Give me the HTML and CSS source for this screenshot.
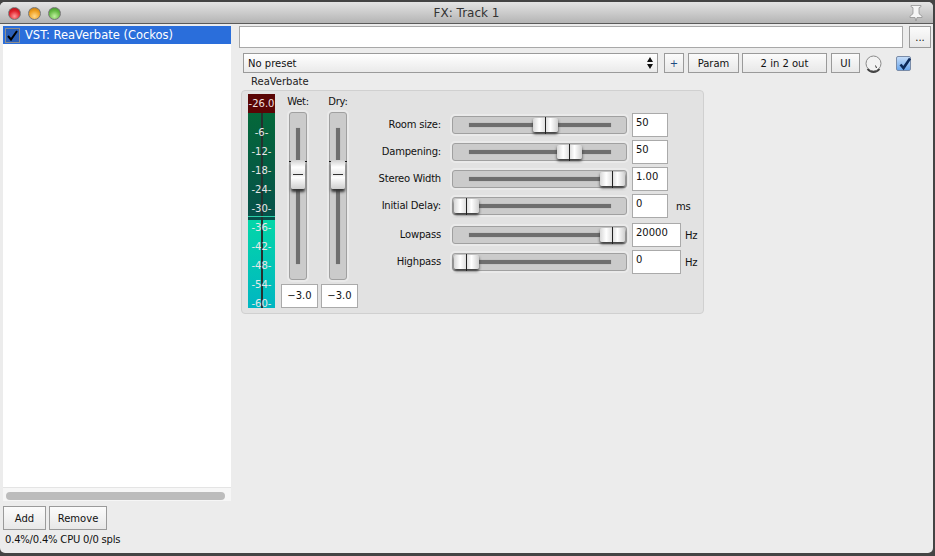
FILE: index.html
```html
<!DOCTYPE html>
<html lang="en">
<head>
  <meta charset="UTF-8">
  <title>FX: Track 1</title>
  <link rel="stylesheet" href="styles.css">
</head>
<body>
  <div class="window">
    <div class="titlebar">
      <div class="lights">
        <span class="light red"></span>
        <span class="light amber"></span>
        <span class="light green"></span>
      </div>
      <span class="title">FX: Track 1</span>
      <svg class="pin" width="14" height="16" viewBox="0 0 14 16">
        <path d="M2 .5h10v1.200l-2 1v6l3 2.500v1.300H8L7 16l-1-3.500H1v-1.300l3-2.500v-6l-2-1z" fill="#f6f6f6" stroke="#8a8a8a" stroke-width=".7"/>
      </svg>
    </div>

    <div class="main">
      <div class="sidebar">
        <div class="fxlist">
          <div class="fxrow selected">
            <span class="rowcheck">
              <svg width="13" height="13" viewBox="0 0 13 13"><path d="M2 7l3 3.500L11 2" fill="none" stroke="#000" stroke-width="2"/></svg>
            </span>
            VST: ReaVerbate (Cockos)
          </div>
          <div class="fxspace"></div>
          <div class="hscroll"><div class="hthumb"></div></div>
        </div>
        <div class="fxbuttons">
          <button class="btn add">Add</button>
          <button class="btn remove">Remove</button>
        </div>
        <div class="status">0.4%/0.4% CPU 0/0 spls</div>
      </div>

      <div class="content">
        <div class="toprow">
          <div class="namebox"></div>
          <button class="btn dots">...</button>
        </div>
        <div class="presetrow">
          <div class="preset">
            <span>No preset</span>
            <svg width="6" height="12" viewBox="0 0 6 12"><path d="M3 0l3 5H0zM0 7h6l-3 5z" fill="#111"/></svg>
          </div>
          <button class="btn plus">+</button>
          <button class="btn param">Param</button>
          <button class="btn pins">2 in 2 out</button>
          <button class="btn ui">UI</button>
          <svg class="knob" width="17" height="18" viewBox="0 0 17 18">
            <circle cx="8.500" cy="8.500" r="7.500" fill="#f2f2f2" stroke="#8a8a8a"/>
            <path d="M2.500 14a7.500 7.500 0 0 0 12 0" fill="none" stroke="#444" stroke-width="1.800"/>
            <path d="M10.500 10.500l1 2.500" stroke="#333"/>
          </svg>
          <span class="bypass">
            <svg width="15" height="15" viewBox="0 0 15 15">
              <path d="M3.500 7.500l3 3.500L13 1.500" fill="none" stroke="#0c2a5a" stroke-width="2.600"/>
            </svg>
          </span>
        </div>

        <div class="pluginname">ReaVerbate</div>
        <div class="panel">
          <div class="meter">
            <div class="peak">-26.0</div>
            <div class="scale">
              <div class="zone-dark">
                <span>-6-</span><span>-12-</span><span>-18-</span><span>-24-</span><span>-30-</span>
              </div>
              <div class="zone-light">
                <span>-36-</span><span>-42-</span><span>-48-</span><span>-54-</span><span>-60-</span>
              </div>
            </div>
            <div class="needle"></div>
            <div class="threshold"></div>
          </div>

          <div class="fader">
            <div class="faderlabel">Wet:</div>
            <div class="vtrack"><div class="groove-v"></div><div class="vthumb"></div></div>
            <div class="valuebox center">−3.0</div>
          </div>
          <div class="fader">
            <div class="faderlabel">Dry:</div>
            <div class="vtrack"><div class="groove-v"></div><div class="vthumb"></div></div>
            <div class="valuebox center">−3.0</div>
          </div>

          <div class="params">
            <div class="paramrow">
              <label>Room size:</label>
              <div class="htrack"><div class="groove-h"></div><div class="sthumb" style="left:80px"></div></div>
              <div class="valuebox">50</div>
            </div>
            <div class="paramrow">
              <label>Dampening:</label>
              <div class="htrack"><div class="groove-h"></div><div class="sthumb" style="left:104px"></div></div>
              <div class="valuebox">50</div>
            </div>
            <div class="paramrow">
              <label>Stereo Width</label>
              <div class="htrack"><div class="groove-h"></div><div class="sthumb" style="left:147px"></div></div>
              <div class="valuebox">1.00</div>
            </div>
            <div class="paramrow">
              <label>Initial Delay:</label>
              <div class="htrack"><div class="groove-h"></div><div class="sthumb" style="left:1px"></div></div>
              <div class="valuebox">0</div>
              <span class="unit">ms</span>
            </div>
            <div class="paramrow low">
              <label>Lowpass</label>
              <div class="htrack"><div class="groove-h"></div><div class="sthumb" style="left:147px"></div></div>
              <div class="valuebox wide">20000</div>
              <span class="unit">Hz</span>
            </div>
            <div class="paramrow">
              <label>Highpass</label>
              <div class="htrack"><div class="groove-h"></div><div class="sthumb" style="left:1px"></div></div>
              <div class="valuebox wide">0</div>
              <span class="unit">Hz</span>
            </div>
          </div>
        </div>
      </div>
    </div>
  </div>
</body>
</html>
```

FILE: styles.css
```css
* {
  box-sizing: border-box;
}

html,
body {
  height: 100%;
}

body {
  margin: 0;
  overflow: hidden;
  background-color: #444;
  font-family: "DejaVu Sans", sans-serif;
  font-size: 10px;
  color: #111;
}

.window {
  width: 933px;
  height: 551px;
  margin-top: 2px;
  background-color: #ececec;
  border-radius: 5px;
  overflow: hidden;
}

/* title bar */
.titlebar {
  position: relative;
  height: 22px;
  display: flex;
  align-items: center;
  justify-content: center;
  background: linear-gradient(#e4e4e4, #b4b4b4);
  border-bottom: 1px solid #5a5a5a;
}

.title {
  font-size: 12px;
  color: #333;
}

.lights {
  position: absolute;
  left: 8px;
  top: 5px;
  display: flex;
  gap: 7px;
}

.light {
  width: 13px;
  height: 13px;
  border-radius: 50%;
  border: 1px solid #777;
}

.red {
  background: radial-gradient(circle at 50% 75%, #ff9a9a, #e0202a 55%, #a01018);
}

.amber {
  background: radial-gradient(circle at 50% 75%, #ffd98a, #f0a020 55%, #b07010);
}

.green {
  background: radial-gradient(circle at 50% 75%, #c0f0a0, #66bb44 55%, #3a8a2a);
}

.pin {
  position: absolute;
  right: 10px;
  top: 3px;
}

.main {
  display: flex;
  height: 528px;
}

/* fx list on the left */
.sidebar {
  width: 231px;
  padding: 2px 0 0 3px;
  flex-shrink: 0;
}

.fxlist {
  height: 475px;
  display: flex;
  flex-direction: column;
  background-color: #fff;
}

.fxrow {
  height: 18px;
  display: flex;
  align-items: center;
  gap: 5px;
  padding-left: 2px;
  font-size: 11.5px;
}

.selected {
  background-color: #2a6edb;
  color: #fff;
}

.rowcheck {
  width: 15px;
  height: 15px;
  display: flex;
  align-items: center;
  justify-content: center;
  border: 1px solid #8d8d8d;
  background-color: #2a5fb8;
}

.fxspace {
  flex: 1;
}

.hscroll {
  height: 14px;
  padding: 4px 6px 2px 3px;
  background-color: #f6f6f6;
  border-top: 1px solid #e4e4e4;
}

.hthumb {
  height: 8px;
  border-radius: 4px;
  background-color: #bcbcbc;
}

.fxbuttons {
  display: flex;
  gap: 3px;
  margin-top: 5px;
}

.status {
  margin: 4px 0 0 2px;
  font-size: 10px;
  line-height: 12px;
  letter-spacing: -.2px;
}

.btn {
  padding: 0;
  border: 1px solid #9a9a9a;
  background: linear-gradient(#fbfbfb, #e8e8e8);
  font-family: inherit;
  font-size: 10px;
  color: #111;
}

.add {
  width: 43px;
  height: 24px;
}

.remove {
  width: 58px;
  height: 24px;
}

/* right side */
.content {
  flex: 1;
  padding: 2px 0 0 8px;
}

.toprow {
  display: flex;
  gap: 6px;
}

.namebox {
  width: 664px;
  height: 22px;
  background-color: #fff;
  border: 1px solid #a8a8a8;
}

.dots {
  width: 22px;
  height: 22px;
}

.presetrow {
  display: flex;
  align-items: flex-start;
  margin: 5px 0 0 4px;
}

.preset {
  width: 415px;
  height: 20px;
  display: flex;
  align-items: center;
  justify-content: space-between;
  padding: 0 4px 0 4px;
  border: 1px solid #9a9a9a;
  background: linear-gradient(#fff, #eaeaea);
  font-size: 10px;
}

.plus {
  width: 20px;
  height: 20px;
  margin-left: 6px;
  color: #1c4a80;
}

.param {
  width: 51px;
  height: 20px;
  margin-left: 4px;
}

.pins {
  width: 85px;
  height: 20px;
  margin-left: 3px;
}

.ui {
  width: 29px;
  height: 20px;
  margin-left: 4px;
}

.knob {
  margin: 2px 0 0 5px;
}

.bypass {
  width: 15px;
  height: 15px;
  margin: 3px 0 0 14px;
  border: 1px solid #7a8ca8;
  border-radius: 2px;
  background: linear-gradient(#c4dcf8, #6aa6ec);
}

.pluginname {
  height: 16px;
  margin: 1px 0 0 12px;
  line-height: 16px;
  font-size: 10px;
  color: #222;
}

.panel {
  width: 463px;
  height: 224px;
  margin-left: 2px;
  padding: 3px 0 0 6px;
  display: flex;
  background-color: #e2e2e2;
  border: 1px solid #d0d0d0;
  border-radius: 4px;
}

/* vu meter */
.meter {
  position: relative;
  width: 27px;
  height: 214px;
  color: #e8e8e8;
  text-align: center;
}

.peak {
  height: 19px;
  line-height: 19px;
  background-color: #5a0505;
  color: #f0e0e0;
}

.scale span {
  position: relative;
  z-index: 1;
  display: block;
  height: 19px;
  line-height: 19px;
}

.zone-dark {
  height: 107px;
  padding-top: 10px;
  background: linear-gradient(#04683a, #06504a);
}

.zone-light {
  height: 88px;
  background: linear-gradient(#04d6a8, #00b6c2);
}

.scale .zone-light span {
  top: -2px;
}

.needle {
  position: absolute;
  left: 13px;
  top: 19px;
  width: 2px;
  height: 195px;
  background-color: #26302e;
}

.threshold {
  position: absolute;
  left: 0;
  top: 122px;
  width: 27px;
  height: 1px;
  background-color: #2ad0a8;
}

/* wet and dry */
.fader {
  width: 37px;
  margin-left: 6px;
  display: flex;
  flex-direction: column;
  align-items: center;
}

.fader + .fader {
  margin-left: 3px;
}

.faderlabel {
  height: 18px;
  margin-right: 3px;
  line-height: 15px;
  letter-spacing: -.25px;
}

.vtrack {
  position: relative;
  width: 18px;
  height: 168px;
  margin: 0 3px 4px 0;
  display: flex;
  justify-content: center;
  align-items: center;
  background-color: #cbcbcb;
  border: 1px solid #a0a0a0;
  border-radius: 3px;
  box-shadow: 0 0 0 2px #eaeaea;
}

.groove-v {
  width: 4px;
  height: 136px;
  background-color: #6e6e6e;
  box-shadow: 0 0 1px #888;
}

.vthumb {
  position: absolute;
  left: 1px;
  top: 47px;
  width: 14px;
  height: 29px;
  background: linear-gradient(#d0d0d0, #fff 25%, #e8e8e8 50%, #fff 60%, #cfcfcf);
  border-radius: 2px;
  box-shadow: 0 3px 3px #333;
}

.vthumb::before {
  content: "";
  position: absolute;
  left: 2px;
  top: 14px;
  width: 10px;
  height: 1px;
  background-color: #333;
}

.vthumb::after {
  content: "";
  position: absolute;
  left: -2px;
  top: 1px;
  width: 18px;
  height: 1px;
  background: linear-gradient(90deg, #111 2px, transparent 2px, transparent 16px, #111 16px);
}

.valuebox {
  width: 36px;
  height: 24px;
  padding: 2px 0 0 3px;
  flex-shrink: 0;
  background-color: #fff;
  border: 1px solid #aaa;
  line-height: 14px;
  color: #111;
}

.valuebox.center {
  width: 37px;
  padding: 4px 0 0;
  text-align: center;
}

.valuebox.wide {
  width: 49px;
}

/* parameter sliders */
.params {
  margin-top: 19px;
}

.paramrow {
  display: flex;
  align-items: center;
  height: 24px;
  margin-bottom: 3px;
}

.paramrow.low {
  margin-top: 5px;
}

.paramrow label {
  width: 83px;
  padding-bottom: 2px;
  text-align: right;
  white-space: nowrap;
  letter-spacing: -.2px;
}

.htrack {
  position: relative;
  width: 175px;
  height: 18px;
  margin: 0 5px 0 11px;
  display: flex;
  align-items: center;
  background-color: #cbcbcb;
  border: 1px solid #a0a0a0;
  border-radius: 3px;
  box-shadow: 0 0 0 2px #eaeaea;
}

.groove-h {
  width: 142px;
  height: 4px;
  margin-left: 16px;
  background-color: #6e6e6e;
  box-shadow: 0 0 1px #888;
}

.sthumb {
  position: absolute;
  top: 1px;
  width: 25px;
  height: 14px;
  background: linear-gradient(90deg, #d8d8d8, #fff 25%, #dcdcdc 50%, #fff 70%, #d0d0d0);
  border-radius: 2px;
  box-shadow: 0 2px 3px #333;
}

.sthumb::before {
  content: "";
  position: absolute;
  left: 12px;
  top: -1px;
  width: 1px;
  height: 17px;
  background-color: #222;
}

.unit {
  margin-left: 4px;
  letter-spacing: -.25px;
}

.valuebox + .unit {
  margin-left: 8px;
}

.valuebox.wide + .unit {
  margin-left: 4px;
}
```
